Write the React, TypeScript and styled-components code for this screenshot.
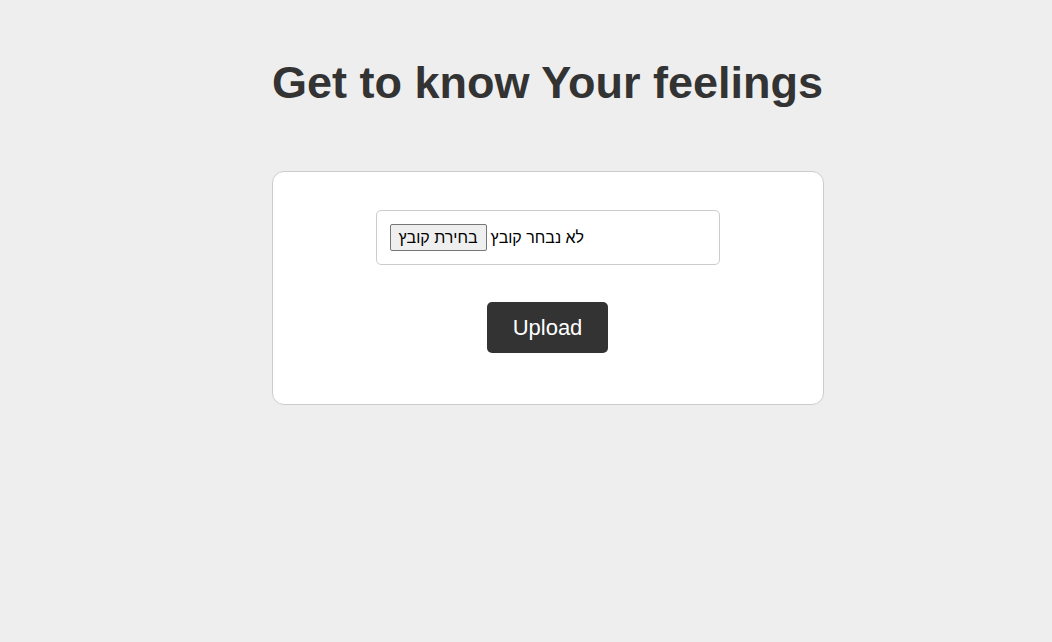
import React from "react";
import styled, { createGlobalStyle } from "styled-components";

const GlobalStyle = createGlobalStyle`
  html, body {
    margin: 0;
    padding: 0;
    background: #eeeeee;
    font-family: "Liberation Sans", Arial, sans-serif;
  }
`;

const Page = styled.main`
  display: flex;
  flex-direction: column;
  align-items: center;
  padding: 57px 0 0 43px;
  min-height: 642px;
  box-sizing: border-box;
`;

const Title = styled.h1`
  margin: 0;
  font-size: 45px;
  line-height: 52px;
  font-weight: 700;
  color: #333333;
`;

const Card = styled.form`
  margin-top: 62px;
  width: 552px;
  box-sizing: border-box;
  background: #ffffff;
  border: 1px solid #cccccc;
  border-radius: 12px;
  padding: 38px 0 51px;
  display: flex;
  flex-direction: column;
  align-items: center;
  gap: 37px;
`;

const FileBox = styled.label`
  width: 344px;
  height: 55px;
  box-sizing: border-box;
  border: 1px solid #cccccc;
  border-radius: 5px;
  padding: 0 13px;
  display: flex;
  align-items: center;
  gap: 4px;
  font-size: 16px;
  color: #000000;
  cursor: pointer;
`;

const HiddenInput = styled.input`
  display: none;
`;

const ChooseButton = styled.span`
  display: inline-flex;
  align-items: center;
  justify-content: center;
  height: 27px;
  box-sizing: border-box;
  padding: 0 8px;
  background: #efefef;
  border: 1px solid #767676;
  border-radius: 2px;
  font-size: 16px;
  color: #000000;
`;

const FileStatus = styled.span`
  font-size: 16px;
  color: #000000;
`;

const UploadButton = styled.button`
  width: 121px;
  height: 51px;
  border: none;
  border-radius: 5px;
  background: #333333;
  color: #ffffff;
  font-family: "Liberation Sans", Arial, sans-serif;
  font-size: 22px;
  cursor: pointer;
  padding: 0;
`;

export default function App() {
  return (
    <>
      <GlobalStyle />
      <Page>
        <Title>Get to know Your feelings</Title>
        <Card onSubmit={(e) => e.preventDefault()}>
          <FileBox>
            <HiddenInput type="file" />
            <ChooseButton>בחירת קובץ</ChooseButton>
            <FileStatus>לא נבחר קובץ</FileStatus>
          </FileBox>
          <UploadButton type="submit">Upload</UploadButton>
        </Card>
      </Page>
    </>
  );
}
